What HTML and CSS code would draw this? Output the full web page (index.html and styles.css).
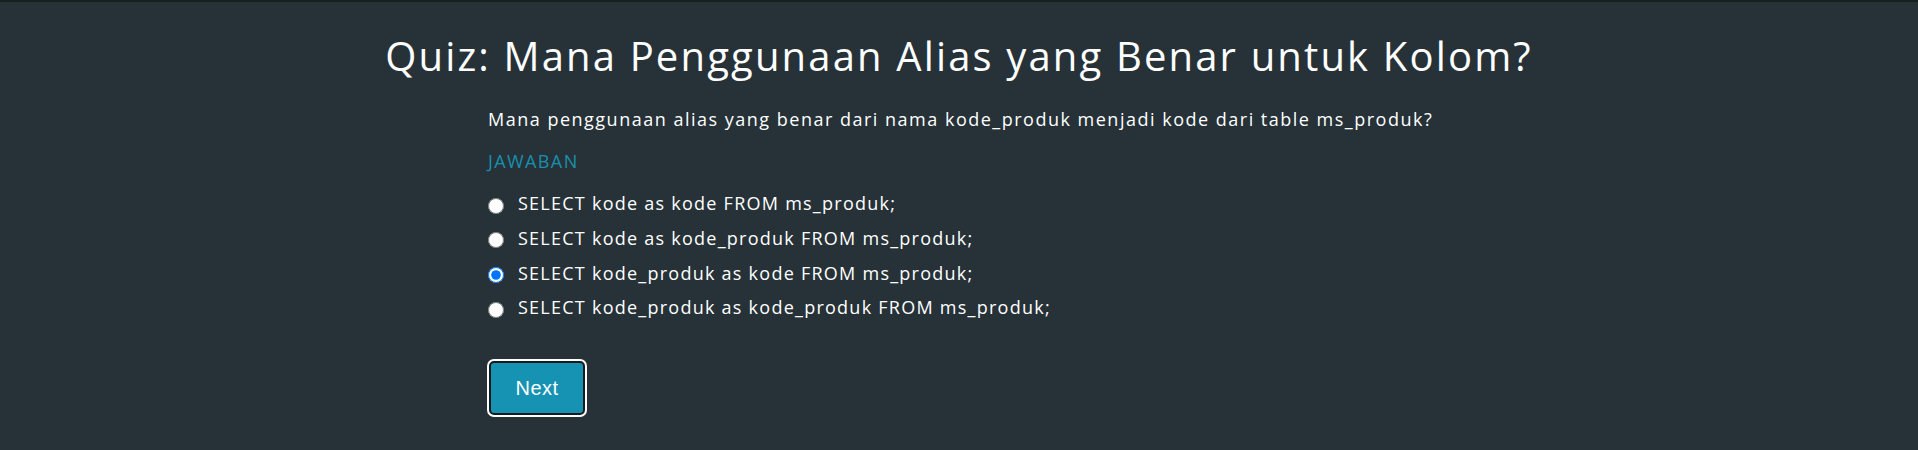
FILE: index.html
```html
<!DOCTYPE html>
<html lang="id">
<head>
<meta charset="utf-8">
<title>Quiz</title>
<link rel="stylesheet" href="styles.css">
</head>
<body>
<div class="topbar"></div>
<main class="page">
  <h1 class="title">Quiz: Mana Penggunaan Alias yang Benar untuk Kolom?</h1>
  <section class="quiz">
    <p class="question">Mana penggunaan alias yang benar dari nama kode_produk menjadi kode dari table ms_produk?</p>
    <div class="label">JAWABAN</div>
    <div class="options">
      <label class="option"><input type="radio" name="ans"><span>SELECT kode as kode FROM ms_produk;</span></label>
      <label class="option"><input type="radio" name="ans"><span>SELECT kode as kode_produk FROM ms_produk;</span></label>
      <label class="option"><input type="radio" name="ans" checked><span>SELECT kode_produk as kode FROM ms_produk;</span></label>
      <label class="option"><input type="radio" name="ans"><span>SELECT kode_produk as kode_produk FROM ms_produk;</span></label>
    </div>
    <button class="next" type="button">Next</button>
  </section>
</main>
</body>
</html>
```

FILE: styles.css
```css
html, body {
  margin: 0;
  padding: 0;
}
body {
  background: #263238;
  color: #ffffff;
  font-family: "Open Sans", "Noto Sans", sans-serif;
  height: 450px;
  overflow: hidden;
}
.topbar {
  height: 2px;
  background: #172021;
}
.page {
  padding-top: 30px;
}
.title {
  margin: 0;
  text-align: center;
  font-size: 40px;
  line-height: 48px;
  font-weight: 500;
  letter-spacing: 2.15px;
}
.quiz {
  max-width: 942px;
  margin: 0 auto;
  display: flex;
  flex-direction: column;
  align-items: flex-start;
}
.question {
  margin: 27px 0 0;
  font-size: 18px;
  line-height: 25px;
  letter-spacing: 1.5px;
  white-space: nowrap;
}
.label {
  margin-top: 17px;
  font-size: 18px;
  line-height: 25px;
  letter-spacing: 1.4px;
  color: #1a8fad;
}
.options {
  margin-top: 17px;
  display: flex;
  flex-direction: column;
  gap: 9.8px;
}
.option {
  display: flex;
  align-items: center;
  gap: 14px;
  font-size: 18px;
  line-height: 25px;
  letter-spacing: 1.25px;
  white-space: nowrap;
}
.option input {
  width: 16px;
  height: 16px;
  margin: 4px 0 0 0;
}
.next {
  margin: 41px 0 0 1px;
  width: 96px;
  height: 54px;
  box-sizing: border-box;
  padding: 0;
  border: 2px solid #151a1c;
  border-radius: 5px;
  box-shadow: 0 0 0 2px #ffffff;
  background: #1692b3;
  color: #ffffff;
  font-family: "Liberation Sans", Arial, sans-serif;
  font-size: 20px;
  line-height: 49px;
  letter-spacing: 0.5px;
}
```
